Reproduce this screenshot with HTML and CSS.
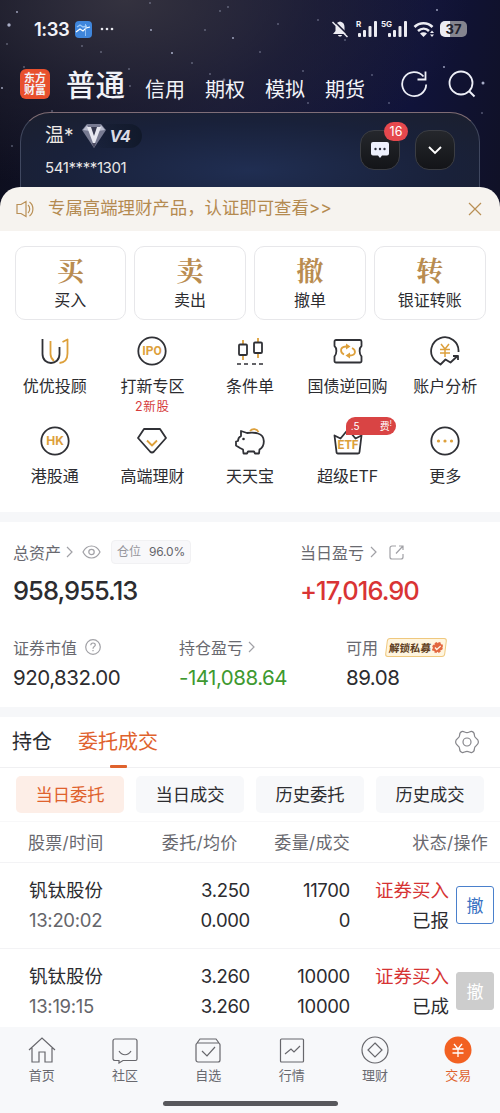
FILE: index.html
```html
<!DOCTYPE html>
<html lang="zh-CN">
<head>
    <meta charset="UTF-8">
    <meta name="viewport" content="width=device-width, initial-scale=1.0">
    <title>交易</title>
    <link rel="stylesheet" href="styles.css">
</head>
<body>

    <!-- Header -->
    <header class="header">
        <svg class="stars" viewBox="0 0 500 210" fill="#cdd3ee">
            <g opacity=".8"><circle cx="9" cy="25" r="1.7"/><circle cx="17" cy="12" r=".9"/><circle cx="151" cy="30" r=".9"/><circle cx="172" cy="53" r="1"/><circle cx="483" cy="83" r="1.5"/><circle cx="437" cy="10" r=".9"/><circle cx="2" cy="88" r=".9"/><circle cx="444" cy="67" r=".9"/><circle cx="233" cy="38" r=".9"/><circle cx="179" cy="99" r="1.200"/></g>
            <g opacity=".35"><circle cx="82" cy="46" r="1"/><circle cx="101" cy="52" r="1"/><circle cx="129" cy="69" r="1"/><circle cx="130" cy="86" r="1"/><circle cx="192" cy="63" r="1"/><circle cx="210" cy="74" r="1"/><circle cx="224" cy="80" r="1.4"/><circle cx="220" cy="11" r="1"/><circle cx="228" cy="7" r="1"/><circle cx="205" cy="30" r="1"/><circle cx="318" cy="20" r="1"/><circle cx="372" cy="75" r="1"/><circle cx="389" cy="103" r="1"/><circle cx="308" cy="103" r="1"/><circle cx="482" cy="113" r="1"/><circle cx="52" cy="111" r="1"/><circle cx="260" cy="52" r="1"/><circle cx="345" cy="40" r="1"/><circle cx="278" cy="24" r="1"/><circle cx="12" cy="146" r="1"/><circle cx="24" cy="67" r="1"/><circle cx="303" cy="71" r="1"/><circle cx="150" cy="3" r="1"/><circle cx="7" cy="44" r="1"/></g>
        </svg>

        <div class="status-bar">
            <span class="clock">1:33</span>
            <svg width="17" height="17" viewBox="0 0 17 17"><rect width="17" height="17" rx="4" fill="#3f86dc"/><path d="M2 6l3-2 3 2 4-1" fill="none" stroke="#9cc8f7" stroke-width="1.4"/><path d="M1 11l4-3 3 2 3-3 4-1" fill="none" stroke="#fff" stroke-width="1.200"/><path d="M10.500 3v12" stroke="#a8d0fa" stroke-width=".8"/></svg>
            <svg class="dots" width="14" height="4" viewBox="0 0 14 4" fill="#e8e8ee"><circle cx="2" cy="2" r="1.300"/><circle cx="7" cy="2" r="1.300"/><circle cx="12" cy="2" r="1.300"/></svg>
            <div class="status-icons">
                <svg width="18" height="18" viewBox="0 0 18 18"><path d="M9 1.500c-3 .5-4.500 2.500-4.500 5.500v4L2 14h14l-2.500-3V7C13.500 4 12 2 9 1.500zM7 15h4c-.5 2-3.500 2-4 0z" fill="#ececf2"/><path d="M3.500 1.500l14 14" stroke="#191a33" stroke-width="1.600"/><path d="M1.500 2l15 15" stroke="#ececf2" stroke-width="1.500"/></svg>
                <span class="signal"><i>R</i><svg width="20" height="17" viewBox="0 0 20 17" fill="#ececf2"><rect y="12" width="3" height="4" rx="1"/><rect x="5" y="9" width="3" height="7" rx="1"/><rect x="10.500" y="5" width="3" height="11" rx="1"/><rect x="16" width="3" height="16" rx="1"/></svg></span>
                <span class="signal signal-5g"><i>5G</i><svg width="20" height="17" viewBox="0 0 20 17" fill="#ececf2"><rect y="12" width="3" height="4" rx="1"/><rect x="5" y="9" width="3" height="7" rx="1"/><rect x="10.500" y="5" width="3" height="11" rx="1"/><rect x="16" width="3" height="16" rx="1"/></svg></span>
                <svg class="wifi" width="22" height="17" viewBox="0 0 22 17"><path d="M1.500 6c5-5 13-5 18 0M5 10c3.500-3 8-3 11 0" fill="none" stroke="#ececf2" stroke-width="2.600"/><path d="M7 12.500c2-1.700 5-1.700 7 0L10.500 16z" fill="#ececf2"/><path d="M17 12l2-2.500 2 2.500zM17 13.500l2 2.500 2-2.500z" fill="#ececf2"/></svg>
                <span class="battery">37</span>
            </div>
        </div>

        <nav class="top-nav">
            <span class="logo">东方<br>财富</span>
            <a class="active">普通</a>
            <a>信用</a>
            <a>期权</a>
            <a>模拟</a>
            <a>期货</a>
            <svg class="refresh" width="28" height="28" viewBox="0 0 28 28"><path d="M23.500 6.500A12 12 0 1 0 26.200 14.500M25.500 1.500v8h-8" fill="none" stroke="#eef0f8" stroke-width="1.800"/></svg>
            <svg class="search" width="28" height="28" viewBox="0 0 28 28"><circle cx="13" cy="13" r="11.500" fill="none" stroke="#eef0f8" stroke-width="1.800"/><path d="M21 21l5.500 5.500" stroke="#eef0f8" stroke-width="2"/></svg>
        </nav>

        <div class="account-card">
            <div class="account-info">
                <div class="account-name">
                    <span>温*</span>
                    <span class="level">
                        <svg width="24" height="24" viewBox="0 0 24 24"><path d="M5 0h14l5 6-12 18L0 6z" fill="#777a91"/><path d="M5 1L1 6l7 1zM19 1l4 5-7 1z" fill="#b9bccd"/><path d="M5 3h5l2 7 2-7h5l-6 16h-2z" fill="#e7e8f0"/><path d="M9 3h6l-3 9z" fill="#383a50"/><path d="M12 24l-2-5h4z" fill="#4c4c62"/></svg>
                        <b>V4</b>
                    </span>
                </div>
                <div class="account-no">541****1301</div>
            </div>
            <div class="account-actions">
                <span class="round-btn">
                    <svg width="18" height="16" viewBox="0 0 18 16"><path d="M2 0h14a2 2 0 0 1 2 2v9.500a2 2 0 0 1-2 2h-5L9 16l-2-2.500H2a2 2 0 0 1-2-2V2a2 2 0 0 1 2-2z" fill="#edf0fc"/><circle cx="4.500" cy="7" r="1.200" fill="#272a38"/><circle cx="9" cy="7" r="1.200" fill="#272a38"/><circle cx="13.500" cy="7" r="1.200" fill="#272a38"/></svg>
                    <em class="badge">16</em>
                </span>
                <span class="round-btn">
                    <svg width="14" height="9" viewBox="0 0 14 9"><path d="M1 1l6 6 6-6" fill="none" stroke="#fff" stroke-width="1.900"/></svg>
                </span>
            </div>
        </div>
    </header>

    <main class="sheet">
        <div class="notice">
            <svg width="18" height="18" viewBox="0 0 18 18" fill="none" stroke="#b98f55" stroke-width="1.200"><path d="M1 4.500h4L10 1.500v15L5 13.500H1zM12 5c2.300 2 2.300 6 0 8M13.500 2c4.500 3 4.500 11 0 14"/></svg>
            <span class="notice-text">专属高端理财产品，认证即可查看&gt;&gt;</span>
            <svg width="14" height="14" viewBox="0 0 14 14"><path d="M1 1l12 12M13 1L1 13" stroke="#b98f55" stroke-width="1.200"/></svg>
        </div>

        <!-- Trade buttons -->
        <section class="trade-buttons">
            <div class="trade-btn"><b>买</b><span>买入</span></div>
            <div class="trade-btn"><b>卖</b><span>卖出</span></div>
            <div class="trade-btn"><b>撤</b><span>撤单</span></div>
            <div class="trade-btn"><b>转</b><span>银证转账</span></div>
        </section>

        <!-- Shortcuts -->
        <section class="shortcuts">
            <div class="shortcut">
                <svg viewBox="0 0 30 30"><path d="M10.500 5v13q0 4 3.500 7" class="gold"/><path d="M2.500 3v15c0 12 17 12 17 0v-7" class="ink"/><path d="M22.500 6l5-2.500v14c0 6-3 9-8 9.500" class="gold"/></svg>
                <span>优优投顾</span>
            </div>
            <div class="shortcut">
                <svg viewBox="0 0 30 30"><circle cx="15" cy="15" r="13.700" class="ink"/><text x="15" y="19.200" class="icon-text ipo">IPO</text></svg>
                <span>打新专区</span>
                <small>2新股</small>
            </div>
            <div class="shortcut">
                <svg viewBox="0 0 30 30"><path d="M8 4v20M23 2v20" class="gold"/><rect x="4" y="8.500" width="8" height="10.500" rx="1" class="ink box"/><rect x="19" y="6.500" width="8" height="10.500" rx="1" class="ink box"/><path d="M2 28h4m3 0h4m4 0h4m3 0h4" class="ink thin"/></svg>
                <span>条件单</span>
            </div>
            <div class="shortcut">
                <svg viewBox="0 0 30 30"><path d="M3 4h24a1.500 1.500 0 0 1 1.500 1.500v4.500c-2.500 2-2.500 8 0 10.500V25a1.500 1.500 0 0 1-1.500 1.500H3A1.500 1.500 0 0 1 1.500 25v-4.500c2.500-2.500 2.500-8.500 0-10.500V5.500A1.500 1.500 0 0 1 3 4z" class="ink"/><path d="M11 18.500c-4-2-4.500-7.500 2-8h1M19 12c4 2 4.500 7-2 7.500h-1" class="gold"/><path d="M13 7.500l4.500 3-4.500 3zM17 16.500l-4.500 3 4.500 3z" fill="#dda03b"/></svg>
                <span>国债逆回购</span>
            </div>
            <div class="shortcut">
                <svg viewBox="0 0 30 30"><path d="M28.500 16A13.700 13.700 0 1 0 5 24.500l5.500 4 5-5 5 3 7-6.500M23 20h5v4" class="ink"/><path d="M11 8l4 5 4-5M10 13.500h10M10 17h10M15 13v8" class="gold thin"/></svg>
                <span>账户分析</span>
            </div>
            <div class="shortcut">
                <svg viewBox="0 0 30 30"><circle cx="15" cy="15" r="13.700" class="ink"/><text x="15" y="19.200" class="icon-text">HK</text></svg>
                <span>港股通</span>
            </div>
            <div class="shortcut">
                <svg viewBox="0 0 30 30"><path d="M7 3h16l6 9-12 13.500q-2 2-4 0L1 12z" class="ink"/><path d="M10 14.500l5 5 5-5" class="gold"/></svg>
                <span>高端理财</span>
            </div>
            <div class="shortcut">
                <svg viewBox="0 0 30 30"><path d="M15 5a5 5 0 0 1 8.500 1" class="gold"/><path d="M12 7L6 5v5c-2 1-3 3-3 5l-2 .500v4l4 2.500 3 1.500.500 4H12l1-2h6l1 2h4l.500-4C30 20 31 10 23 7.500c-3-1-7-1-11-.5z" class="ink"/><circle cx="8.500" cy="13" r="1.300" fill="#2f2f35"/></svg>
                <span>天天宝</span>
            </div>
            <div class="shortcut">
                <svg viewBox="0 0 30 30"><path d="M1.500 9.500l6 3 7.500-9 7.500 9 6-3-2 16.500q0 1.500-1.500 1.500H5Q3.500 27.500 3.500 26z" class="ink"/><text x="15" y="23" class="icon-text etf">ETF</text></svg>
                <em class="promo"><i>.5</i><i>费<sup>!</sup></i></em>
                <span>超级ETF</span>
            </div>
            <div class="shortcut">
                <svg viewBox="0 0 30 30"><circle cx="15" cy="15" r="13.700" class="ink"/><g fill="#dda03b"><circle cx="8.500" cy="15" r="1.600"/><circle cx="15" cy="15" r="1.600"/><circle cx="21.500" cy="15" r="1.600"/></g></svg>
                <span>更多</span>
            </div>
        </section>

        <!-- Assets -->
        <section class="assets">
            <div class="assets-main">
                <div class="asset">
                    <div class="label">总资产
                        <svg class="arrow tight" width="7" height="12" viewBox="0 0 7 12"><path d="M1 1l5 5-5 5"/></svg>
                        <svg class="eye" width="19" height="14" viewBox="0 0 19 14"><path d="M1 7c4-8 13-8 17 0-4 8-13 8-17 0z"/><circle cx="9.500" cy="7" r="2.700"/></svg>
                        <span class="position">仓位<b>96.0%</b></span>
                    </div>
                    <div class="amount">958,955.13</div>
                </div>
                <div class="asset">
                    <div class="label">当日盈亏
                        <svg class="arrow" width="7" height="12" viewBox="0 0 7 12"><path d="M1 1l5 5-5 5"/></svg>
                        <svg class="share" width="15" height="15" viewBox="0 0 15 15"><path d="M7 1H3a2 2 0 0 0-2 2v9a2 2 0 0 0 2 2h9a2 2 0 0 0 2-2V9M7 8.500l6.500-7M10 1h4v4"/></svg>
                    </div>
                    <div class="amount profit">+17,016.90</div>
                </div>
            </div>
            <div class="assets-sub">
                <div class="asset">
                    <div class="label">证券市值
                        <svg class="help" width="16" height="16" viewBox="0 0 16 16"><circle cx="8" cy="8" r="7.300"/><path d="M5.800 6.300c0-3 4.500-3 4.500-.300C10.300 7.700 8 7.500 8 9.700M8 11v1.200"/></svg>
                    </div>
                    <div class="value">920,832.00</div>
                </div>
                <div class="asset">
                    <div class="label">持仓盈亏
                        <svg class="arrow tight" width="7" height="12" viewBox="0 0 7 12"><path d="M1 1l5 5-5 5"/></svg>
                    </div>
                    <div class="value loss">-141,088.64</div>
                </div>
                <div class="asset">
                    <div class="label">可用
                        <span class="unlock"><b>解锁私募</b><svg width="11" height="11" viewBox="0 0 11 11"><circle cx="5.500" cy="5.500" r="4.500" fill="#e2673f" stroke="#e2673f" stroke-width="2" stroke-dasharray="2.300 1.200"/><path d="M3 5.500l2 2L8.500 4" fill="none" stroke="#fff3e2" stroke-width="1.300"/></svg></span>
                    </div>
                    <div class="value">89.08</div>
                </div>
            </div>
        </section>

        <!-- Orders -->
        <section class="orders">
            <div class="tabs">
                <span class="tab">持仓</span>
                <span class="tab active">委托成交</span>
                <svg width="24" height="24" viewBox="0 0 24 24" fill="none" stroke="#85858a" stroke-width="1.200"><circle cx="12" cy="12" r="4"/><path d="M12 2.600c2 0 3-1.400 4.600-1.200 2 .400 2.800 2 2.800 3.800s.600 2.400 2 3.400 2 2.200 2 3.400-.600 2.400-2 3.400-2 1.600-2 3.400-.800 3.400-2.800 3.800c-1.600.200-2.600-1.200-4.600-1.200s-3 1.400-4.600 1.200c-2-.400-2.800-2-2.800-3.800s-.600-2.400-2-3.400-2-2.200-2-3.400.600-2.400 2-3.400 2-1.600 2-3.400.800-3.400 2.800-3.800C9 1.200 10 2.600 12 2.600z"/></svg>
            </div>
            <div class="pills">
                <span class="pill active">当日委托</span>
                <span class="pill">当日成交</span>
                <span class="pill">历史委托</span>
                <span class="pill">历史成交</span>
            </div>
            <div class="order-row order-head">
                <span>股票/时间</span>
                <span>委托/均价</span>
                <span>委量/成交</span>
                <span>状态/操作</span>
            </div>
            <div class="order-row">
                <div>钒钛股份<br><span class="time">13:20:02</span></div>
                <div class="num">3.250<br>0.000</div>
                <div class="num">11700<br>0</div>
                <div><span class="buy">证券买入</span><br>已报</div>
                <button class="cancel">撤</button>
            </div>
            <div class="order-row">
                <div>钒钛股份<br><span class="time">13:19:15</span></div>
                <div class="num">3.260<br>3.260</div>
                <div class="num">10000<br>10000</div>
                <div><span class="buy">证券买入</span><br>已成</div>
                <button class="cancel disabled">撤</button>
            </div>
        </section>
    </main>

    <footer class="bottom-bar">
        <nav class="bottom-nav">
            <a><svg viewBox="0 0 28 28"><path d="M1 14L14 2l13 12M4 12v14h7V16h6v10h7V12"/></svg>首页</a>
            <a><svg viewBox="0 0 28 28"><path d="M4 3h20a2 2 0 0 1 2 2v18a1.500 1.500 0 0 1-1.500 1.500H12L8 27v-2.500H4A2 2 0 0 1 2 23V5a2 2 0 0 1 2-2zM8 15c3 5 9 5 12 0"/></svg>社区</a>
            <a><svg viewBox="0 0 28 28"><path d="M3 7l3-4h16l3 4M4 7h20a2 2 0 0 1 2 2v15a2 2 0 0 1-2 2H4a2 2 0 0 1-2-2V9a2 2 0 0 1 2-2zM8 15l5 5 8-9"/></svg>自选</a>
            <a><svg viewBox="0 0 28 28"><rect x="2.500" y="3" width="23" height="23" rx="1"/><path d="M7 18l6-5 3 3 6-6"/></svg>行情</a>
            <a><svg viewBox="0 0 28 28"><circle cx="14" cy="14" r="13"/><path d="M14 7l7 7-7 7-7-7z"/></svg>理财</a>
            <a class="active"><svg viewBox="0 0 28 28"><circle cx="14" cy="14" r="13.500" fill="#f26122" stroke="none"/><path d="M10 8l4 5 4-5M8.500 13h11M8.500 17h11M14 13v8" stroke="#fff" stroke-width="1.300"/></svg>交易</a>
        </nav>
        <div class="home-indicator"></div>
    </footer>

</body>
</html>
```
FILE: styles.css
```css
* {
    box-sizing: border-box;
}

body {
    margin: 0;
    width: 500px;
    height: 1113px;
    overflow: hidden;
    background: #fff;
    color: #2c2c30;
    font-family: Inter, "Noto Sans CJK SC", sans-serif;
    font-size: 16px;
}

i, em {
    font-style: normal;
}

svg {
    flex-shrink: 0;
}

/* Header */
.header {
    position: relative;
    height: 210px;
    padding-top: 11px;
    background: radial-gradient(ellipse at 25% 0%, #34323f 0%, rgba(40, 39, 55, 0.5) 35%, transparent 65%), linear-gradient(100deg, #0c0d1b, #151737 45%, #10133a 80%, #101126);
    color: #f2f3f8;
}

.stars {
    position: absolute;
    top: 0;
    left: 0;
    width: 500px;
    height: 210px;
}

.status-bar {
    position: relative;
    display: flex;
    align-items: center;
    height: 36px;
    padding: 0 33px 0 34px;
}

.clock {
    width: 41px;
    font-size: 18.5px;
    font-weight: 600;
    letter-spacing: -0.5px;
}

.dots {
    margin-left: 8px;
}

.status-icons {
    display: flex;
    align-items: center;
    margin-left: auto;
}

.signal {
    display: flex;
    align-items: flex-start;
    height: 17px;
    margin-left: 7px;
}

.signal i {
    width: 2px;
    margin-top: -1px;
    font-size: 8px;
    line-height: 8px;
    font-weight: 700;
}

.signal-5g {
    margin-left: 3px;
}

.signal-5g i {
    width: 7px;
}

.wifi {
    margin-left: 5px;
}

.battery {
    width: 27px;
    height: 16px;
    margin-left: 5px;
    border-radius: 5px;
    background: linear-gradient(90deg, #ececf2 38%, #85858f 38%);
    color: #20202b;
    font-size: 13px;
    font-weight: 700;
    line-height: 16px;
    text-align: center;
}

.top-nav {
    position: relative;
    display: flex;
    align-items: center;
    height: 65px;
    padding-left: 20px;
}

.logo {
    width: 30px;
    height: 30px;
    margin: 8px 16px 0 0;
    padding-top: 3px;
    border-radius: 6px;
    background: #e8502d;
    font-size: 11px;
    font-weight: 700;
    line-height: 12px;
    text-align: center;
}

.top-nav a {
    margin: 20px 20px 0 0;
    font-size: 20px;
    line-height: 28px;
}

.top-nav .active {
    margin-top: 11px;
    font-size: 29.5px;
    font-weight: 500;
    line-height: 36px;
}

.refresh {
    margin: 9px 0 0 15px;
}

.search {
    margin: 9px 0 0 20px;
}

.account-card {
    position: relative;
    display: flex;
    justify-content: space-between;
    height: 98px;
    margin: 0 20px;
    padding: 10px 24px 0;
    border-radius: 30px 30px 0 0;
    border: 1px solid rgba(155, 163, 195, 0.3);
    border-top-color: rgba(195, 160, 160, 0.6);
    background: radial-gradient(ellipse at 50% 60%, #202e52, #19213a 60%, #1b1f2e);
}

.account-name {
    display: flex;
    align-items: center;
    height: 26px;
    font-size: 19px;
    line-height: 26px;
    color: #eee9e4;
}

.level {
    display: flex;
    align-items: center;
    height: 24px;
    margin-left: 8px;
    padding-right: 12px;
    border-radius: 12px;
    background: linear-gradient(90deg, transparent 20%, #11192a);
}

.level b {
    margin-left: 4px;
    font-size: 16px;
    font-style: italic;
    letter-spacing: -1px;
    color: #d9dae5;
}

.account-no {
    margin-top: 7px;
    font-size: 15px;
    line-height: 24px;
    letter-spacing: -0.4px;
    color: #e9e7e6;
}

.account-actions {
    display: flex;
    gap: 15px;
    margin-top: 7px;
}

.round-btn {
    position: relative;
    display: flex;
    align-items: center;
    justify-content: center;
    width: 40px;
    height: 40px;
    border-radius: 14px;
    border: 1px solid #3b3d43;
    background: linear-gradient(#25272c, #131418);
}

.badge {
    position: absolute;
    top: -9px;
    left: 23px;
    width: 24px;
    height: 19px;
    border-radius: 10px;
    background: #e5484d;
    color: #fff;
    font-size: 12.5px;
    line-height: 19px;
    text-align: center;
}

/* Sheet */
.sheet {
    position: relative;
    height: 840px;
    margin-top: -23px;
}

.notice {
    display: flex;
    align-items: center;
    height: 44px;
    padding: 0 18px 0 16px;
    border-radius: 20px 20px 0 0;
    background: #f6f3ef;
}

.notice-text {
    flex: 1;
    margin-left: 14px;
    font-size: 17.4px;
    line-height: 26px;
    padding-bottom: 2px;
    color: #b48a50;
}

.trade-buttons {
    display: grid;
    grid-template-columns: repeat(4, 1fr);
    gap: 8.5px;
    padding: 15px 14.5px 0;
}

.trade-btn {
    display: flex;
    flex-direction: column;
    align-items: center;
    height: 74px;
    padding-top: 6px;
    border: 1px solid #e7e7ea;
    border-radius: 10px;
}

.trade-btn b {
    font-family: "Noto Serif CJK SC", "Noto Sans CJK SC", serif;
    font-size: 27px;
    line-height: 34px;
    color: #b98c50;
}

.trade-btn span {
    margin-top: 1px;
    font-size: 16px;
    line-height: 24px;
}

.shortcuts {
    display: grid;
    grid-template-columns: repeat(5, 1fr);
    grid-template-rows: 90px 86px;
    height: 192px;
    padding: 16px 6px 0;
}

.shortcut {
    position: relative;
    display: flex;
    flex-direction: column;
    align-items: center;
    font-size: 16px;
    line-height: 24px;
    white-space: nowrap;
}

.shortcut svg {
    width: 30px;
    height: 30px;
    margin-bottom: 8px;
}

.shortcut small {
    margin-top: 0;
    font-size: 12.5px;
    line-height: 18px;
    letter-spacing: 0.8px;
    color: #d63c3c;
}

.ink, .gold {
    fill: none;
    stroke: #303136;
    stroke-width: 1.8;
    stroke-linejoin: round;
}

.gold {
    stroke: #dda03b;
}

.thin {
    stroke-width: 1.5;
}

.box {
    fill: #fff;
}

.icon-text {
    fill: #dda03b;
    font-size: 12px;
    font-weight: 700;
    text-anchor: middle;
}

.ipo {
    font-family: Roboto, sans-serif;
    font-size: 12px;
}

.etf {
    font-family: Roboto, sans-serif;
    font-size: 12px;
}

.promo {
    position: absolute;
    top: -9px;
    left: 47px;
    display: flex;
    justify-content: space-between;
    width: 50px;
    height: 18px;
    padding: 0 4px 0 5px;
    border-radius: 9px 9px 9px 0;
    background: #d94444;
    color: #fff;
    font-size: 10px;
    line-height: 18px;
}

.promo sup {
    font-size: 7px;
    line-height: 0;
}

/* Assets */
.assets {
    height: 205px;
    padding: 18px 13px 0;
    border-top: 10px solid #f6f7f9;
    border-bottom: 10px solid #f6f7f9;
}

.assets-main {
    display: grid;
    grid-template-columns: 287px 1fr;
}

.assets-sub {
    display: grid;
    grid-template-columns: 166px 167px 1fr;
    margin-top: 27px;
}

.label {
    display: flex;
    align-items: center;
    height: 24px;
    color: #69696f;
    white-space: nowrap;
}

.label svg {
    fill: none;
    stroke: #a1a1a6;
    stroke-width: 1.2;
}

.arrow {
    margin-left: 6px;
}

.label .tight {
    margin-left: 5px;
}

.eye {
    margin-left: 9px;
}

.share {
    margin-left: 12px;
}

.help {
    margin-left: 8px;
}

.position {
    height: 24px;
    margin-left: 10px;
    padding: 0 5px;
    border: 1px solid #f1f1f3;
    border-radius: 4px;
    background: #f8f8fa;
    color: #96969c;
    font-size: 12px;
    line-height: 22px;
}

.position b {
    margin-left: 8px;
    color: #65656a;
    font-weight: 400;
    letter-spacing: -0.2px;
}

.amount {
    margin-top: 10px;
    font-size: 25.5px;
    font-weight: 500;
    line-height: 34px;
    letter-spacing: -0.95px;
}

.value {
    margin-top: 7px;
    font-size: 20.5px;
    line-height: 24px;
    letter-spacing: -0.5px;
}

.profit {
    color: #d93434;
}

.loss {
    color: #3e9930;
}

.unlock {
    display: flex;
    align-items: center;
    height: 19px;
    margin-left: 8px;
    padding: 0 2px;
    border: 1px solid #efc87e;
    border-radius: 3px;
    background: #fff5df;
    transform: skewX(-7deg);
}

.unlock b {
    font-size: 10.5px;
    font-weight: 700;
    color: #603d20;
}

.label .unlock svg {
    margin-left: 1px;
}

/* Orders */
.tabs {
    display: flex;
    align-items: center;
    height: 51px;
    padding: 0 21px 0 12px;
    border-bottom: 1px solid #f0f0f2;
}

.tab {
    position: relative;
    margin-right: 26px;
    font-size: 20px;
    line-height: 51px;
}

.tab.active {
    color: #df622d;
}

.tab.active::after {
    content: "";
    position: absolute;
    bottom: 0;
    left: 50%;
    width: 17px;
    height: 3px;
    margin-left: -8px;
    border-radius: 1px;
    background: #df622d;
}

.tabs svg {
    margin-left: auto;
}

.pills {
    display: grid;
    grid-template-columns: repeat(4, 1fr);
    gap: 12px;
    height: 54px;
    padding: 8px 16px;
    border-bottom: 1px solid #f8f8f9;
}

.pill {
    border-radius: 5px;
    background: #f7f8fa;
    font-size: 17.3px;
    line-height: 37px;
    text-align: center;
}

.pill.active {
    background: #fdeee7;
    color: #df622d;
}

.order-row {
    position: relative;
    display: grid;
    grid-template-columns: 120px 101px 100px 99px 1fr;
    height: 85.5px;
    padding: 12px 6px 0 29px;
    border-bottom: 1px solid #f3f3f5;
    font-size: 18.5px;
    line-height: 30px;
    text-align: right;
    white-space: nowrap;
}

.order-row > :first-child {
    text-align: left;
}

.order-head {
    grid-template-columns: 110px 99.5px 112.5px 1fr;
    height: 41px;
    padding: 6px 12px 0 28px;
    color: #69696f;
    font-size: 17px;
    letter-spacing: 0.3px;
}

.num {
    letter-spacing: -0.3px;
}

.time {
    color: #65656a;
    letter-spacing: -0.3px;
}

.buy {
    color: #d63333;
}

.cancel {
    justify-self: end;
    width: 38px;
    height: 38px;
    margin-top: 11px;
    padding: 0;
    border: 1px solid #4a80cc;
    border-radius: 3px;
    background: #fff;
    color: #3971c2;
    font: 17px/36px "Noto Sans CJK SC", sans-serif;
}

.cancel.disabled {
    border-color: #cdcdcd;
    background: #cdcdcd;
    color: #fff;
}

/* Bottom bar */
.bottom-bar {
    position: relative;
    height: 86px;
    padding-top: 9px;
    background: #f7f8fa;
}

.bottom-nav {
    display: grid;
    grid-template-columns: repeat(6, 1fr);
    height: 64px;
}

.bottom-nav a {
    display: flex;
    flex-direction: column;
    align-items: center;
    color: #69696f;
    font-size: 13px;
    line-height: 20px;
}

.bottom-nav svg {
    width: 28px;
    height: 28px;
    margin-bottom: 1px;
    fill: none;
    stroke: #67676c;
    stroke-width: 1.2;
}

.bottom-nav .active {
    color: #df622d;
}

.home-indicator {
    width: 175px;
    height: 5px;
    margin: 1px auto 0;
    border-radius: 3px;
    background: #58585c;
}
```
